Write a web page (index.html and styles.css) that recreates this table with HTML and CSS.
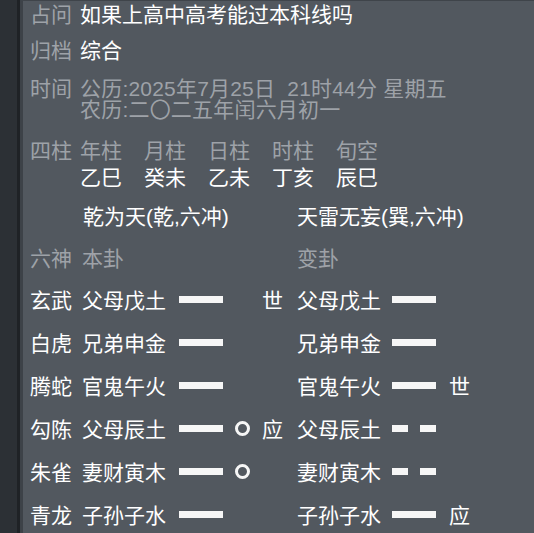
FILE: index.html
```html
<!DOCTYPE html>
<html lang="zh">
<head>
<meta charset="utf-8">
<link rel="stylesheet" href="styles.css">
</head>
<body>
<div class="app">
  <div class="side"></div>
  <div class="panel">
    <div class="info r1"><span class="lbl">占问</span><span class="val">如果上高中高考能过本科线吗</span></div>
    <div class="info r2"><span class="lbl">归档</span><span class="val">综合</span></div>
    <div class="info r3"><span class="lbl">时间</span><span class="val dim">公历:2025年7月25日&nbsp; 21时44分 星期五<br>农历:二〇二五年闰六月初一</span></div>
    <div class="pillars lblrow"><span class="lbl">四柱</span><span>年柱</span><span>月柱</span><span>日柱</span><span>时柱</span><span>旬空</span></div>
    <div class="pillars valrow"><span></span><span>乙巳</span><span>癸未</span><span>乙未</span><span>丁亥</span><span>辰巳</span></div>
    <div class="yao names"><span class="c-left">乾为天(乾,六冲)</span><span class="c-right">天雷无妄(巽,六冲)</span></div>
    <div class="yao head"><span>六神</span><span class="c-left">本卦</span><span class="c-right">变卦</span></div>
    <div class="rows">
      <div class="yao"><span>玄武</span><span>父母戊土</span><span class="ln"></span><span class="mk"></span><span class="sy">世</span><span>父母戊土</span><span class="ln"></span><span class="sy2"></span></div>
      <div class="yao"><span>白虎</span><span>兄弟申金</span><span class="ln"></span><span class="mk"></span><span class="sy"></span><span>兄弟申金</span><span class="ln"></span><span class="sy2"></span></div>
      <div class="yao"><span>腾蛇</span><span>官鬼午火</span><span class="ln"></span><span class="mk"></span><span class="sy"></span><span>官鬼午火</span><span class="ln"></span><span class="sy2">世</span></div>
      <div class="yao"><span>勾陈</span><span>父母辰土</span><span class="ln"></span><span class="mk"><i class="ring"></i></span><span class="sy">应</span><span>父母辰土</span><span class="ln yin"><i></i><i></i></span><span class="sy2"></span></div>
      <div class="yao"><span>朱雀</span><span>妻财寅木</span><span class="ln"></span><span class="mk"><i class="ring"></i></span><span class="sy"></span><span>妻财寅木</span><span class="ln yin"><i></i><i></i></span><span class="sy2"></span></div>
      <div class="yao"><span>青龙</span><span>子孙子水</span><span class="ln"></span><span class="mk"></span><span class="sy"></span><span>子孙子水</span><span class="ln"></span><span class="sy2">应</span></div>
    </div>
  </div>
</div>
</body>
</html>
```

FILE: styles.css
```css
html, body {
  margin: 0;
  padding: 0;
  background: #52585f;
}
body {
  font-family: "Liberation Sans", "Noto Sans CJK SC", sans-serif;
  font-size: 21px;
  color: #ffffff;
}
.app {
  display: flex;
  width: 534px;
  height: 533px;
  overflow: hidden;
}
.side {
  width: 17px;
  flex: none;
  background: #2c3035;
  border-right: 3px solid #1f2226;
}
.panel {
  flex: 1;
  background: #52585f;
  border-left: 3px solid #3d4248;
  border-top: 1px solid #3f444a;
  padding: 3px 0 0 7px;
  box-sizing: border-box;
}
.lbl, .dim, .lblrow span, .head span {
  color: #9ea2a8;
}
.info {
  display: flex;
  line-height: 22px;
}
.info .lbl {
  width: 50px;
  flex: none;
}
.r2 { margin-top: 14px; }
.r3 { margin-top: 16px; line-height: 21px; }
.r3 .val { letter-spacing: 0.2px; }
.pillars {
  display: grid;
  grid-template-columns: 50px repeat(5, 64px);
  line-height: 22px;
}
.lblrow { margin-top: 20px; }
.valrow { margin-top: 5px; }
.yao {
  display: grid;
  grid-template-columns: 52px 97px 44px 39px 35px 95px 44px 40px;
  align-items: center;
}
.names {
  margin-top: 17px;
  line-height: 22px;
}
.names .c-left { grid-column: 2 / 6; padding-left: 1px; }
.names .c-right { grid-column: 6 / 9; }
.head {
  margin-top: 20px;
  line-height: 22px;
}
.head .c-left { grid-column: 2 / 6; }
.head .c-right { grid-column: 6 / 9; }
.rows {
  margin-top: 9px;
}
.rows .yao {
  height: 43px;
  line-height: 22px;
}
.ln {
  height: 7px;
  background: #f6f6f6;
  margin-top: -2px;
}
.ln.yin {
  background: none;
  display: flex;
  justify-content: space-between;
}
.ln.yin i {
  width: 16px;
  height: 7px;
  background: #f6f6f6;
}
.mk {
  display: flex;
  align-items: center;
  padding-left: 12px;
  height: 15px;
  margin-top: -2px;
}
.ring {
  width: 15px;
  height: 15px;
  box-sizing: border-box;
  border: 3px solid #f6f6f6;
  border-radius: 50%;
}
.sy2 {
  padding-left: 13px;
}
```
